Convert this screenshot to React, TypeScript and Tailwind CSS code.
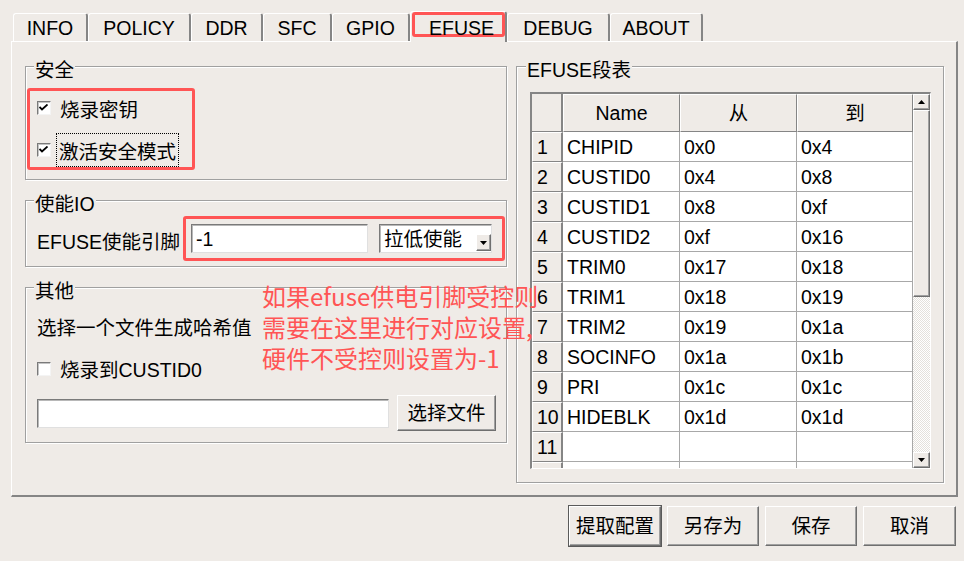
import React from "react";

const raised =
  "border border-t-white border-l-white border-r-[#6f6f6f] border-b-[#6f6f6f] shadow-[inset_-1px_-1px_0_#a0a0a0]";

const tabs = [
  { label: "INFO", w: "w-[75px]" },
  { label: "POLICY", w: "w-[103px]" },
  { label: "DDR", w: "w-[72px]" },
  { label: "SFC", w: "w-[69px]" },
  { label: "GPIO", w: "w-[78px]" },
  { label: "EFUSE", w: "w-[97px]", active: true },
  { label: "DEBUG", w: "w-[103px]" },
  { label: "ABOUT", w: "w-[93px]" },
];

const rows = [
  ["CHIPID", "0x0", "0x4"],
  ["CUSTID0", "0x4", "0x8"],
  ["CUSTID1", "0x8", "0xf"],
  ["CUSTID2", "0xf", "0x16"],
  ["TRIM0", "0x17", "0x18"],
  ["TRIM1", "0x18", "0x19"],
  ["TRIM2", "0x19", "0x1a"],
  ["SOCINFO", "0x1a", "0x1b"],
  ["PRI", "0x1c", "0x1c"],
  ["HIDEBLK", "0x1d", "0x1d"],
  ["", "", ""],
  ["", "", ""],
];

const CheckBox = ({ checked }: { checked?: boolean }) => (
  <span className="flex h-[14px] w-[14px] shrink-0 items-center justify-center border border-t-[#7a7a7a] border-l-[#7a7a7a] border-r-[#f4f4f4] border-b-[#f4f4f4] bg-white shadow-[inset_1px_1px_0_#c4c4c4]">
    {checked && (
      <svg width="9" height="7" viewBox="0 0 9 7" className="-mt-[2px] -ml-[1px]">
        <path d="M0.5 3 L3 5.5 L8.5 0.5" stroke="#000" strokeWidth="1.8" fill="none" />
      </svg>
    )}
  </span>
);

const Group = ({
  title,
  className,
  titleClass = "ml-[8px]",
  children,
}: {
  title: string;
  className?: string;
  titleClass?: string;
  children?: React.ReactNode;
}) => (
  <div
    className={`border border-[#a0a0a0] shadow-[inset_1px_1px_0_#fff,1px_1px_0_#fff] ${className ?? ""}`}
  >
    <div className={`-mt-[8px] w-fit bg-[#efebe7] px-[1px] leading-[22px] ${titleClass}`}>{title}</div>
    {children}
  </div>
);

const Arrow = ({ down }: { down?: boolean }) => (
  <svg width="7" height="4" viewBox="0 0 7 4">
    <path d={down ? "M0 0 L7 0 L3.5 4 Z" : "M0 4 L7 4 L3.5 0 Z"} fill="#000" />
  </svg>
);

const Button = ({ children, className }: { children: React.ReactNode; className?: string }) => (
  <div className={`flex items-center justify-center ${raised} ${className ?? ""}`}>{children}</div>
);

const EfuseTable = () => (
  <div className="ml-[13px] mt-[11px] flex h-[377px] w-[401px] border-l-2 border-t-2 border-r border-b border-l-[#858585] border-t-[#858585] border-r-white border-b-white">
    <div className="h-full w-[381px] overflow-hidden bg-white">
      <div className="grid grid-cols-[31px_117px_117px_116px] grid-rows-[38px] auto-rows-[30px]">
        <div className="border-r-2 border-b border-r-[#858585] border-b-[#858585] bg-[#efebe7]" />
        {["Name", "从", "到"].map((h) => (
          <div
            key={h}
            className="flex items-center justify-center border-t border-l border-r border-b border-t-white border-l-white border-r-[#858585] border-b-[#858585] bg-[#efebe7]"
          >
            {h}
          </div>
        ))}
        {rows.map((r, i) => (
          <React.Fragment key={i}>
            {/* row 12 is only a sliver at the bottom edge, so its number isn't shown */}
            <div className="flex items-center border-t border-l border-r-2 border-b border-t-white border-l-white border-r-[#858585] border-b-[#858585] bg-[#efebe7] pl-[4px]">
              {i < 11 ? i + 1 : ""}
            </div>
            {r.map((c, j) => (
              <div key={j} className="flex items-center border-r border-b border-[#a8a8a8] pl-[4px]">
                {c}
              </div>
            ))}
          </React.Fragment>
        ))}
      </div>
    </div>
    <div className="flex w-[17px] flex-col bg-[#efebe7]">
      <div className={`flex h-[16px] items-center justify-center bg-[#efebe7] ${raised}`}>
        <Arrow />
      </div>
      <div className={`h-[187px] bg-[#efebe7] ${raised}`} />
      <div className="flex-1 bg-[repeating-conic-gradient(#ffffff_0%_25%,#e4e1dc_0%_50%)] bg-size-[2px_2px]" />
      <div className={`flex h-[16px] items-center justify-center bg-[#efebe7] ${raised}`}>
        <Arrow down />
      </div>
    </div>
  </div>
);

const App = () => {
  return (
    <div className="relative h-[561px] w-[964px] overflow-hidden bg-[#efebe7] pt-[11px] font-['Liberation_Sans','Noto_Sans_CJK_SC',sans-serif] text-[19.5px] leading-[22px] text-black">
      {/* tab bar */}
      <div className="flex h-[30px] items-end pl-[13px]">
        {tabs.map((t) =>
          t.active ? (
            <div
              key={t.label}
              className={`relative z-10 -mb-px h-[31px] ${t.w} rounded-t-[3px] border-l border-t border-r-2 border-l-white border-t-white border-r-[#858585] bg-[#efebe7] pl-[1px]`}
            >
              <div className="h-[25px] w-[93px] rounded-[3px] border-[3px] border-[#ff5555] pl-[6px] pt-[2px] text-center">
                {t.label}
              </div>
            </div>
          ) : (
            <div
              key={t.label}
              className={`flex h-[28px] ${t.w} items-center justify-center rounded-t-[3px] border-l border-t border-r-2 border-l-white border-t-white border-r-[#858585] pt-[1px]`}
            >
              {t.label}
            </div>
          )
        )}
      </div>

      {/* tab panel */}
      <div className="ml-[11px] flex h-[456px] w-[947px] border-l border-t border-r-2 border-b-2 border-l-white border-t-white border-r-[#858585] border-b-[#858585] pl-[13px] pt-[24px]">
        <div className="flex w-[482px] flex-col">
          <Group title="安全" className="h-[114px]">
            <div className="ml-[1px] mt-[7px] flex h-[82px] w-[168px] flex-col gap-[8px] rounded-[3px] border-[3px] border-[#ff5555] pl-[7px]">
              <div className="flex h-[34px] items-center">
                <CheckBox checked />
                <span className="ml-[9px] pt-[3px]">烧录密钥</span>
              </div>
              <div className="flex h-[34px] items-center">
                <CheckBox checked />
                <span className="ml-[5px] flex h-[34px] items-center border border-dotted border-black px-[2px] pt-[3px]">
                  激活安全模式
                </span>
              </div>
            </div>
          </Group>

          <Group title="使能IO" className="mt-[20px] h-[67px]">
            <div className="mt-[1px] flex items-center">
              <span className="ml-[11px] w-[146px] whitespace-nowrap pt-[6px]">EFUSE使能引脚</span>
              <div className="flex h-[45px] w-[322px] items-center rounded-[3px] border-[3px] border-[#ff5555] pl-[5px]">
                <div className="flex h-[29px] w-[177px] items-center border border-t-[#7a7a7a] border-l-[#7a7a7a] border-r-[#e0e0e0] border-b-[#e0e0e0] bg-white pl-[4px] pt-[1px] shadow-[inset_1px_1px_0_#b8b8b8]">
                  -1
                </div>
                <div className="ml-[11px] flex h-[29px] w-[113px] items-end justify-between border border-t-[#7a7a7a] border-l-[#7a7a7a] border-r-[#e0e0e0] border-b-[#e0e0e0] bg-white pb-[1px] pl-[4px] shadow-[inset_1px_1px_0_#b8b8b8]">
                  <span className="self-center pt-[2px]">拉低使能</span>
                  <span className={`flex h-[17px] w-[15px] items-center justify-center bg-[#efebe7] ${raised}`}>
                    <Arrow down />
                  </span>
                </div>
              </div>
            </div>
          </Group>

          <Group title="其他" className="mt-[20px] h-[156px]">
            <div className="ml-[11px] mt-[15px]">选择一个文件生成哈希值</div>
            <div className="ml-[11px] mt-[19px] flex h-[22px] items-center gap-[9px]">
              <CheckBox />
              <span className="pt-[1px]">烧录到CUSTID0</span>
            </div>
            <div className="ml-[11px] mt-[15px] flex items-center">
              <div className="h-[29px] w-[352px] border border-t-[#7a7a7a] border-l-[#7a7a7a] border-r-[#e0e0e0] border-b-[#e0e0e0] bg-white shadow-[inset_1px_1px_0_#b8b8b8]" />
              <Button className="ml-[8px] h-[36px] w-[99px]">选择文件</Button>
            </div>
          </Group>
        </div>

        <Group title="EFUSE段表" titleClass="ml-[9px]" className="ml-[9px] h-[417px] w-[428px]">
          <EfuseTable />
        </Group>
      </div>

      {/* dialog buttons */}
      <div className="mt-[8px] flex h-[42px] items-center justify-end pr-[8px]">
        <div className="h-[42px] w-[94px] border border-[#5a5a5a]">
          <Button className="h-full w-full">提取配置</Button>
        </div>
        <Button className="ml-[5px] h-[40px] w-[92px]">另存为</Button>
        <Button className="ml-[6px] h-[40px] w-[92px]">保存</Button>
        <Button className="ml-[6px] h-[40px] w-[93px]">取消</Button>
      </div>

      {/* annotation */}
      <div className="absolute left-[262px] top-[280px] z-20 whitespace-nowrap font-['Noto_Sans_CJK_SC',sans-serif] text-[24px] leading-[31px] text-[#ff5555]">
        <div>如果efuse供电引脚受控则</div>
        <div>需要在这里进行对应设置,</div>
        <div>硬件不受控则设置为-1</div>
      </div>
    </div>
  );
};

export default App;
